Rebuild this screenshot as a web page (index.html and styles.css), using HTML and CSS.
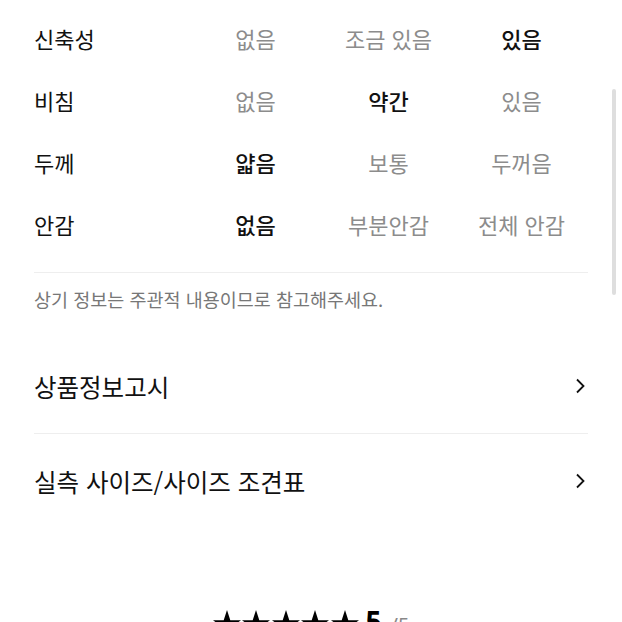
FILE: index.html
```html
<!DOCTYPE html>
<html lang="ko">
<head>
<meta charset="utf-8">
<link rel="stylesheet" href="styles.css">
</head>
<body>
<div class="page">
  <div class="spec">
    <div class="row">
      <div class="label">신축성</div>
      <div class="val">없음</div>
      <div class="val">조금 있음</div>
      <div class="val on">있음</div>
    </div>
    <div class="row">
      <div class="label">비침</div>
      <div class="val">없음</div>
      <div class="val on">약간</div>
      <div class="val">있음</div>
    </div>
    <div class="row">
      <div class="label">두께</div>
      <div class="val on">얇음</div>
      <div class="val">보통</div>
      <div class="val">두꺼음</div>
    </div>
    <div class="row">
      <div class="label">안감</div>
      <div class="val on">없음</div>
      <div class="val">부분안감</div>
      <div class="val">전체 안감</div>
    </div>
  </div>
  <p class="note">상기 정보는 주관적 내용이므로 참고해주세요.</p>
  <div class="links">
    <div class="link">
      <span>상품정보고시</span>
      <svg class="chev" width="10" height="16" viewBox="0 0 10 16"><path d="M2 1.5 L8.5 8 L2 14.5" fill="none" stroke="#111" stroke-width="1.8"/></svg>
    </div>
    <div class="link">
      <span>실측 사이즈/사이즈 조견표</span>
      <svg class="chev" width="10" height="16" viewBox="0 0 10 16"><path d="M2 1.5 L8.5 8 L2 14.5" fill="none" stroke="#111" stroke-width="1.8"/></svg>
    </div>
  </div>
  <div class="rating">
    <div class="stars">
      <svg class="star" width="28" height="27" viewBox="0 0 28 27"><path d="M14 0 L17.3 10.2 L28 10.3 L19.4 16.6 L22.7 27 L14 20.6 L5.3 27 L8.6 16.6 L0 10.3 L10.7 10.2 Z" fill="#000"/></svg>
      <svg class="star" width="28" height="27" viewBox="0 0 28 27"><path d="M14 0 L17.3 10.2 L28 10.3 L19.4 16.6 L22.7 27 L14 20.6 L5.3 27 L8.6 16.6 L0 10.3 L10.7 10.2 Z" fill="#000"/></svg>
      <svg class="star" width="28" height="27" viewBox="0 0 28 27"><path d="M14 0 L17.3 10.2 L28 10.3 L19.4 16.6 L22.7 27 L14 20.6 L5.3 27 L8.6 16.6 L0 10.3 L10.7 10.2 Z" fill="#000"/></svg>
      <svg class="star" width="28" height="27" viewBox="0 0 28 27"><path d="M14 0 L17.3 10.2 L28 10.3 L19.4 16.6 L22.7 27 L14 20.6 L5.3 27 L8.6 16.6 L0 10.3 L10.7 10.2 Z" fill="#000"/></svg>
      <svg class="star" width="28" height="27" viewBox="0 0 28 27"><path d="M14 0 L17.3 10.2 L28 10.3 L19.4 16.6 L22.7 27 L14 20.6 L5.3 27 L8.6 16.6 L0 10.3 L10.7 10.2 Z" fill="#000"/></svg>
    </div>
    <div class="scoreline">
      <span class="score">5</span><span class="total">/5</span>
    </div>
  </div>
</div>
<div class="scrollbar"></div>
</body>
</html>
```
FILE: styles.css
```css
html, body {
  margin: 0;
  padding: 0;
  background: #fff;
  overflow: hidden;
}
body {
  font-family: "Noto Sans CJK KR", "Noto Sans", sans-serif;
  color: #111;
}
.page {
  padding: 7px 34px 0 34px;
}
.spec {
  padding-bottom: 17px;
  border-bottom: 1px solid #eeeeee;
}
.row {
  display: grid;
  grid-template-columns: 155px 133px 133px 133px;
  height: 62px;
  align-items: center;
  font-size: 22px;
}
.label {
  color: #111;
}
.val {
  text-align: center;
  color: #8c8c8c;
}
.val.on {
  color: #111;
  font-weight: 500;
}
.note {
  margin: 14px 0 0 0;
  font-size: 18.5px;
  line-height: 24px;
  color: #777;
}
.links {
  margin-top: 28px;
}
.link {
  height: 94px;
  display: flex;
  align-items: center;
  justify-content: space-between;
  font-size: 24.5px;
  padding-right: 3px;
}
.link + .link {
  border-top: 1px solid #eeeeee;
}
.chev {
  display: block;
}
.rating {
  margin-top: 79px;
  display: flex;
  align-items: flex-start;
  justify-content: center;
  gap: 7px;
}
.stars {
  display: flex;
  gap: 1.5px;
  margin-top: 3px;
}
.star {
  display: block;
}
.scoreline {
  font-family: "Noto Sans", sans-serif;
  line-height: 1;
}
.score {
  font-size: 28px;
  font-weight: 700;
  color: #000;
}
.total {
  font-size: 20px;
  color: #888;
  margin-left: 9px;
}
.scrollbar {
  position: absolute;
  left: 612px;
  top: 89px;
  width: 4px;
  height: 206px;
  background: #dedede;
  border-radius: 2px;
}
```
